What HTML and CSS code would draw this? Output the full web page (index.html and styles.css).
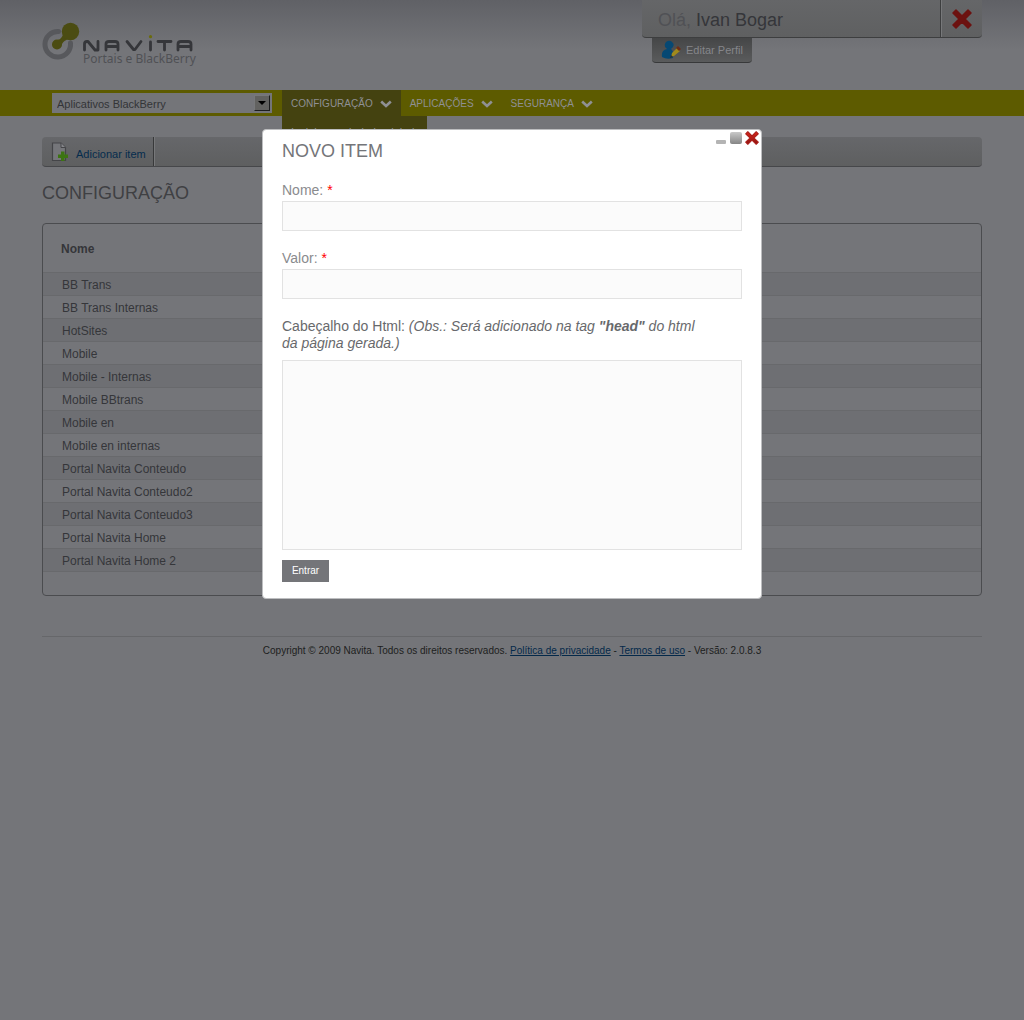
FILE: index.html
```html
<!DOCTYPE html>
<html lang="pt-BR">
<head>
<meta charset="utf-8">
<title>Navita - Configuração</title>
<link rel="stylesheet" href="styles.css">
</head>
<body>
<svg class="defs" aria-hidden="true">
  <defs>
    <linearGradient id="red" x1="0" y1="0" x2="0" y2="1"><stop offset="0" stop-color="#d8261c"/><stop offset="1" stop-color="#8c1512"/></linearGradient>
    <linearGradient id="gray" x1="0" y1="0" x2="0" y2="1"><stop offset="0" stop-color="#c8c8c8"/><stop offset="1" stop-color="#858585"/></linearGradient>
    <symbol id="cross" viewBox="0 0 20 20"><path d="M4 1 1 4l6 6-6 6 3 3 6-6 6 6 3-3-6-6 6-6-3-3-6 6z" stroke-width="1.5" stroke-linejoin="round"/></symbol>
    <symbol id="chevron" viewBox="0 0 12 8"><path d="M1.200 1.500 6 6l4.800-4.500" fill="none" stroke="#8f9094" stroke-width="2.600"/></symbol>
  </defs>
</svg>
<header class="header wrap">
  <a class="logo" href="#" aria-label="Navita">
    <svg class="logo-mark" viewBox="0 0 38 38" aria-hidden="true">
      <path d="M16.500 9.500A12.800 12.800 0 1 0 28.500 21" fill="none" stroke="#57585c" stroke-width="5" stroke-linecap="round"/>
      <path d="M21 13 26 17C22 19 21 20 19 24L12 19C17 18 19 17 21 13z" fill="#4b4c12"/>
      <circle cx="28.500" cy="9.500" r="8.700" fill="#4b4c12"/><circle cx="15" cy="22.500" r="5" fill="#4b4c12"/>
    </svg>
    <span class="logo-text">
      <svg class="wordmark" viewBox="0 0 110 17" aria-hidden="true">
        <g fill="none" stroke="#35363a" stroke-width="2.800" stroke-linecap="round" stroke-linejoin="round">
          <path d="M1.500 15V9Q1.500 6.500 4 6.500H5L12 15H15V6.500"/>
          <path d="M23 15V9Q23 6.500 26 6.500H32Q35 6.500 35 9V15M24 11.500H34"/>
          <path d="M44 6.500 50.500 14.500H52L58 6.500"/><path d="M67.500 7V15M75 6.500H88M81.500 7V15"/>
          <path d="M95 15V9Q95 6.500 98 6.500H105Q108 6.500 108 9V15M96 11.500H107"/>
        </g><circle cx="67.500" cy="1.700" r="1.600" fill="#6b6c0b"/>
      </svg>
      <span class="tagline">Portais e BlackBerry</span>
    </span>
  </a>
  <div class="account">
    <div class="account-bar">
      <p class="hello">Olá, <strong>Ivan Bogar</strong></p>
      <button class="logout" aria-label="Sair"><svg class="cross-dark" width="20" height="20"><use href="#cross"/></svg></button>
    </div>
    <a class="profile" href="#">
      <svg width="20" height="20" viewBox="0 0 20 20" aria-hidden="true"><path d="M1 17Q0 10 6 9 2 6 5 2 9-1 12 3 14 6 10 9 13 11 12 18 6 20 1 17z" fill="#064873"/><path d="m10 17 1-4 5-5 3 3-6 5z" fill="#a08a1c"/><path d="m15 8 2-2 3 3-2 2z" fill="#6f2e16"/><path d="m9 18 1-3 2 2z" fill="#303030"/></svg>
      <span>Editar Perfil</span>
    </a>
  </div>
</header>
<nav class="nav">
  <div class="wrap nav-inner">
    <div class="picker">
      <select class="select" aria-label="Aplicativo"><option>Aplicativos BlackBerry</option></select>
      <span class="picker-arrow" aria-hidden="true"></span>
    </div>
    <ul class="menu">
      <li class="menu-item active"><a href="#">CONFIGURAÇÃO <svg width="12" height="8"><use href="#chevron"/></svg></a>
        <a class="submenu" href="#">Incluir propriedade global</a></li>
      <li class="menu-item"><a href="#">APLICAÇÕES <svg width="12" height="8"><use href="#chevron"/></svg></a></li>
      <li class="menu-item"><a href="#">SEGURANÇA <svg width="12" height="8"><use href="#chevron"/></svg></a></li>
    </ul>
  </div>
</nav>
<main class="wrap">
  <div class="toolbar">
    <a class="add" href="#">
      <svg width="18" height="20" viewBox="0 0 18 20" aria-hidden="true"><path d="M1.500 1H10l4.500 4.500V18.500H1.500z" fill="#75767a" stroke="#444548" stroke-width="1.200"/><path d="M10 1v4.500h4.500" fill="#85868a" stroke="#444548"/><path d="M10 9.500h3.500v3h3.500V16h-3.500v3H10v-3H7v-3.500h3z" fill="#3c7412"/></svg>
      <span>Adicionar item</span>
    </a>
  </div>
  <h1 class="title">CONFIGURAÇÃO</h1>
  <div class="panel">
    <table class="table">
      <thead><tr><th>Nome</th></tr></thead>
      <tbody>
        <tr><td>BB Trans</td></tr>
        <tr><td>BB Trans Internas</td></tr>
        <tr><td>HotSites</td></tr>
        <tr><td>Mobile</td></tr>
        <tr><td>Mobile - Internas</td></tr>
        <tr><td>Mobile BBtrans</td></tr>
        <tr><td>Mobile en</td></tr>
        <tr><td>Mobile en internas</td></tr>
        <tr><td>Portal Navita Conteudo</td></tr>
        <tr><td>Portal Navita Conteudo2</td></tr>
        <tr><td>Portal Navita Conteudo3</td></tr>
        <tr><td>Portal Navita Home</td></tr>
        <tr><td>Portal Navita Home 2</td></tr>
      </tbody>
    </table>
  </div>
</main>
<footer class="footer wrap">Copyright © 2009 Navita. Todos os direitos reservados. <a href="#">Política de privacidade</a> - <a href="#">Termos de uso</a> - Versão: 2.0.8.3</footer>

<section class="dialog" role="dialog" aria-labelledby="dialog-title">
  <div class="dialog-head">
    <h2 class="dialog-title" id="dialog-title">NOVO ITEM</h2>
    <div class="window-buttons">
      <button aria-label="Minimizar"><svg width="12" height="14"><rect x="1" y="9" width="10" height="4" rx="1" fill="#b4b4b4"/></svg></button>
      <button aria-label="Maximizar"><svg width="14" height="14"><rect x="1" y="1" width="12" height="12" rx="2" fill="url(#gray)"/></svg></button>
      <button aria-label="Fechar"><svg class="cross-red" width="14" height="14"><use href="#cross"/></svg></button>
    </div>
  </div>
  <form class="form">
    <label class="label" for="nome">Nome: <span class="required">*</span></label>
    <input class="field" id="nome" type="text">
    <label class="label" for="valor">Valor: <span class="required">*</span></label>
    <input class="field" id="valor" type="text">
    <label class="label dark" for="head">Cabeçalho do Html: <em>(Obs.: Será adicionado na tag <strong>"head"</strong> do html da página gerada.)</em></label>
    <textarea class="field area" id="head"></textarea>
    <button class="submit" type="button">Entrar</button>
  </form>
</section>
</body>
</html>
```
FILE: styles.css
```css
* { box-sizing: border-box; }
body {
  position: relative;
  margin: 0;
  min-height: 100vh;
  background: #747579 linear-gradient(#606166, #747579) 0 0 / 100% 50px no-repeat;
  font: 12px/16px "Liberation Sans", Arial, sans-serif;
  color: #35363a;
}
h1, h2, p, ul { margin: 0; padding: 0; font-weight: normal; }
a { color: inherit; text-decoration: none; }
button { border: 0; padding: 0; background: none; font: inherit; }
svg { display: block; flex: none; }
.defs { position: absolute; width: 0; height: 0; }
.wrap { max-width: 940px; margin: 0 auto; }

.header { display: flex; justify-content: space-between; height: 90px; }
.logo { display: flex; padding-top: 22px; height: 68px; }
.logo-mark { width: 38px; height: 38px; }
.logo-text { display: flex; flex-direction: column; padding: 13px 0 0 3px; }
.wordmark { width: 110px; height: 17px; }
.tagline { font: 12px/14px "Noto Sans", sans-serif; color: #505155; white-space: nowrap; }
.account { width: 340px; }
.account-bar {
  display: flex;
  height: 38px;
  border-bottom: 1px solid #3d3e3f;
  border-radius: 0 0 4px 4px;
  background: linear-gradient(#656668, #5f6061);
}
.hello { flex: 1; padding: 2px 16px 0; font-size: 18px; line-height: 36px; color: #505155; }
.hello strong { font-weight: normal; color: #35363a; }
.logout { width: 42px; padding: 0 11px; border-left: 1px solid #3d3e3f; box-shadow: inset 1px 0 #77787a; }
.cross-dark { fill: #6c1210; stroke: #6c1210; }
.cross-red { fill: url(#red); stroke: #a81a16; }
.profile {
  display: flex;
  align-items: center;
  gap: 5px;
  width: 100px;
  height: 25px;
  margin-left: 10px;
  padding-left: 9px;
  border-bottom: 1px solid #38393a;
  border-radius: 0 0 4px 4px;
  background: linear-gradient(#454647, #5a5b5c);
  font-size: 11px;
  color: #85868a;
}

.nav { background: #5d5b00; }
.nav-inner { display: flex; height: 26px; padding-left: 10px; }
.picker { position: relative; width: 220px; height: 20px; margin: 3px 10px 0 0; }
.select {
  width: 100%;
  height: 20px;
  padding: 2px 5px 0;
  border: 0;
  border-radius: 0;
  appearance: none;
  background: #747579;
  font: 11px/16px "Liberation Sans", Arial, sans-serif;
  color: #333437;
}
.picker-arrow {
  position: absolute;
  top: 2px;
  right: 2px;
  width: 16px;
  height: 16px;
  border: 1px solid;
  border-color: #77787a #1d1e1f #1d1e1f #77787a;
  background: #626260;
  pointer-events: none;
}
.picker-arrow::after {
  content: "";
  display: block;
  width: 0;
  margin: 5px auto 0;
  border: 4px solid transparent;
  border-top-color: #000;
  border-bottom: 0;
}
.menu { display: flex; list-style: none; font-size: 10px; line-height: 26px; color: #8f9094; }
.menu-item { position: relative; padding: 1px 9px 0; }
.menu-item.active { background: #444210; }
.menu-item > a { display: flex; align-items: center; gap: 7px; }
.menu-item > .submenu {
  position: absolute;
  top: 26px;
  left: 0;
  width: 145px;
  height: 32px;
  padding-left: 9px;
  background: #444210;
  font-size: 11px;
  white-space: nowrap;
}

.toolbar {
  display: flex;
  height: 30px;
  margin-top: 21px;
  border-bottom: 1px solid #46474a;
  border-radius: 4px;
  background: linear-gradient(#66676a, #5e5f60);
}
.add {
  display: flex;
  align-items: center;
  gap: 7px;
  width: 112px;
  padding-left: 9px;
  border-right: 1px solid #38393a;
  box-shadow: 1px 0 #77787a;
  font-size: 11px;
  color: #052c4d;
  white-space: nowrap;
}
.add span { padding-top: 4px; }
.title { margin: 14px 0 18px; font-size: 18px; line-height: 24px; color: #3f4043; }
.panel { border: 1px solid #4b4c4f; border-radius: 4px; padding-bottom: 23px; }
.table { width: 100%; border-collapse: collapse; text-align: left; }
.table th { height: 48px; padding: 2px 18px 0; }
.table td { height: 23px; padding: 2px 19px 0; border-top: 1px solid #68696c; }
.table tbody { border-bottom: 1px solid #68696c; }
.table tbody tr:nth-child(odd) { background: #6e6f73; }

.footer {
  margin-top: 40px;
  padding-top: 6px;
  border-top: 1px solid #66676a;
  text-align: center;
  font: 10px/16px "Liberation Sans", Arial, sans-serif;
  color: #1d1e20;
}
.footer a { color: #04294a; text-decoration: underline; }

.dialog {
  position: absolute;
  top: 129px;
  left: 0;
  right: 0;
  max-width: 500px;
  margin: 0 auto;
  padding: 0 19px 16px;
  border: 1px solid #bdbec0;
  border-radius: 4px;
  background: #fff;
  color: #747579;
}
.dialog-head { display: flex; justify-content: space-between; }
.dialog-title { padding-top: 9px; font-size: 18px; line-height: 24px; }
.window-buttons { display: flex; gap: 2px; height: 14px; margin: 1px -17px 0 0; }
.form { display: flex; flex-direction: column; align-items: flex-start; padding-top: 19px; }
.label { padding-right: 36px; font-size: 14px; line-height: 17px; color: #8a8b8e; }
.label.dark { color: #68696c; }
.required { color: #f00; }
.field {
  width: 100%;
  height: 30px;
  margin: 2px 0 19px;
  border: 1px solid #e2e2e2;
  background: #fbfbfb;
  font: inherit;
}
.area { display: block; height: 190px; margin: 8px 0 10px; resize: none; }
.submit { width: 47px; height: 22px; background: #747579; font-size: 10px; color: #fff; }
```
